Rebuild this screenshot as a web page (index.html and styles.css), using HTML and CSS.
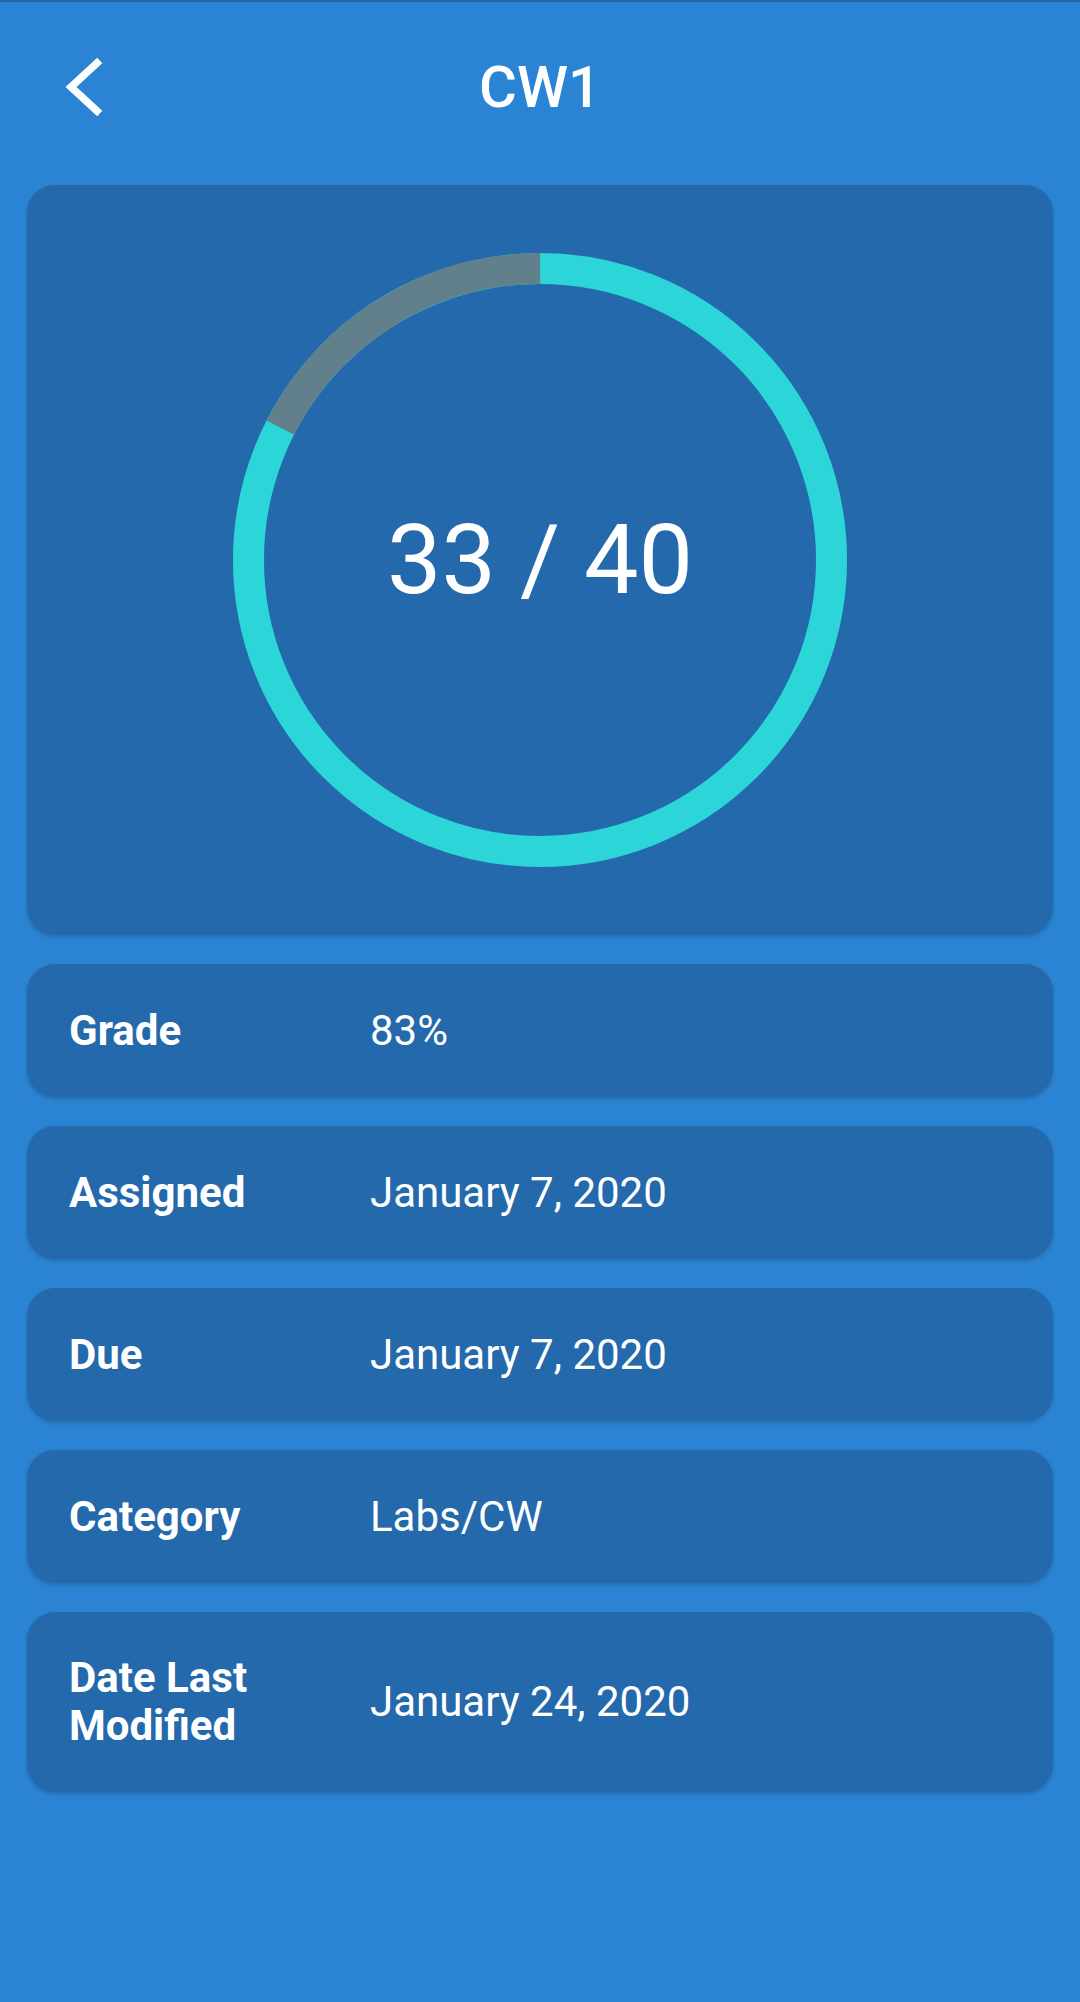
FILE: index.html
```html
<!DOCTYPE html>
<html lang="en">
<head>
<meta charset="utf-8">
<title>CW1</title>
<link rel="stylesheet" href="styles.css">
</head>
<body>
<div class="topline"></div>
<header class="header">
  <div class="back">
    <svg width="44" height="64" viewBox="0 0 44 64" aria-hidden="true">
      <polyline points="35,8 9,32 35,56" fill="none" stroke="#ffffff" stroke-width="7.5" stroke-linecap="square" stroke-linejoin="miter"/>
    </svg>
  </div>
  <h1 class="title">CW1</h1>
  <div></div>
</header>
<main class="list">
  <section class="card score-card">
    <div class="ring">
      <svg width="614" height="614" viewBox="0 0 614 614" aria-hidden="true">
        <circle cx="307" cy="307" r="291.5" fill="none" stroke="#2cd5d8" stroke-width="31"/>
        <circle cx="307" cy="307" r="291.5" fill="none" stroke="#627f8c" stroke-width="31" stroke-dasharray="320.5 2000" transform="rotate(207 307 307)"/>
      </svg>
      <div class="score">33 / 40</div>
    </div>
  </section>
  <div class="card row"><div class="label">Grade</div><div class="value">83%</div></div>
  <div class="card row"><div class="label">Assigned</div><div class="value">January 7, 2020</div></div>
  <div class="card row"><div class="label">Due</div><div class="value">January 7, 2020</div></div>
  <div class="card row"><div class="label">Category</div><div class="value">Labs/CW</div></div>
  <div class="card row"><div class="label">Date Last Modified</div><div class="value">January 24, 2020</div></div>
</main>
</body>
</html>
```

FILE: styles.css
```css
html, body {
  margin: 0;
  padding: 0;
  height: 100%;
}
body {
  background: #2b84d3;
  font-family: Roboto, "Noto Sans", "Liberation Sans", sans-serif;
  color: #ffffff;
}
.topline {
  height: 2px;
  background: #2266a6;
}
.header {
  height: 174px;
  box-sizing: border-box;
  padding-bottom: 4px;
  display: grid;
  grid-template-columns: 1fr auto 1fr;
  align-items: center;
}
.back {
  padding-left: 62px;
  display: flex;
  align-items: center;
}
.back svg {
  display: block;
}
.title {
  margin: 0;
  font-size: 58px;
  font-weight: 500;
  line-height: 1;
}
.list {
  margin-top: 9px;
  padding: 0 27px;
  display: flex;
  flex-direction: column;
  gap: 29px;
}
.card {
  background: #2369ab;
  border-radius: 28px;
  box-shadow: 0 2px 4px rgba(0, 0, 0, 0.18);
}
.score-card {
  height: 750px;
  display: flex;
  align-items: center;
  justify-content: center;
}
.ring {
  display: grid;
  place-items: center;
}
.ring > * {
  grid-area: 1 / 1;
}
.ring svg {
  display: block;
}
.score {
  font-size: 97px;
  font-weight: 400;
  line-height: 1;
}
.row {
  min-height: 133px;
  box-sizing: border-box;
  padding: 42px 42px;
  display: grid;
  grid-template-columns: 301px 1fr;
  align-items: center;
}
.label {
  font-size: 42px;
  font-weight: 700;
  line-height: 48px;
}
.value {
  font-size: 42px;
  font-weight: 400;
  line-height: 48px;
}
```
